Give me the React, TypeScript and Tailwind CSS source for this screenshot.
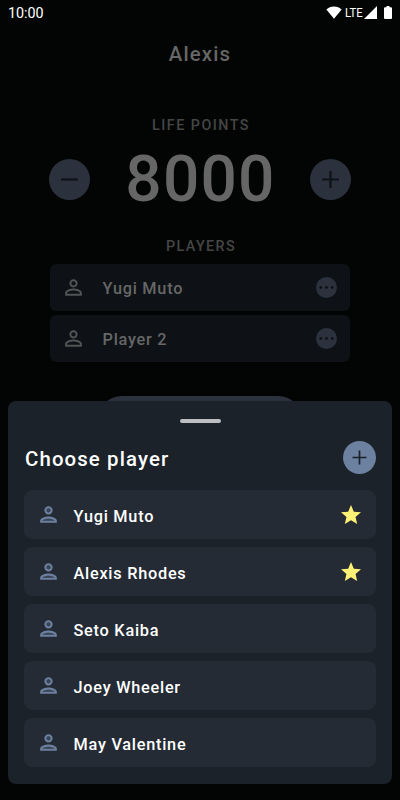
interface Player {
  name: string;
  favorite?: boolean;
}

const duelists: Player[] = [
  { name: "Yugi Muto" },
  { name: "Player 2" },
];

const roster: Player[] = [
  { name: "Yugi Muto", favorite: true },
  { name: "Alexis Rhodes", favorite: true },
  { name: "Seto Kaiba" },
  { name: "Joey Wheeler" },
  { name: "May Valentine" },
];

function PersonIcon() {
  return (
    <svg viewBox="0 0 24 24" fill="currentColor" className="size-[25px] text-[#525354]">
      <path d="M12 5.9a2.1 2.1 0 1 1 0 4.2 2.1 2.1 0 0 1 0-4.2m0 9c2.97 0 6.1 1.46 6.1 2.1v1.1H5.9V17c0-.64 3.13-2.1 6.1-2.1M12 4C9.79 4 8 5.79 8 8s1.79 4 4 4 4-1.79 4-4-1.79-4-4-4zm0 9c-2.67 0-8 1.34-8 4v3h16v-3c0-2.66-5.33-4-8-4z" />
    </svg>
  );
}

function PersonTwoToneIcon() {
  return (
    <svg viewBox="0 0 24 24" fill="currentColor" className="size-[25px] text-[#6c80a0]">
      <path d="M12 6a2 2 0 1 0 0 4 2 2 0 0 0 0-4zM12 16c-2.69 0-5.77 1.28-6 2h12c-.2-.71-3.3-2-6-2z" opacity="0.3" />
      <path
        fillRule="evenodd"
        d="M12 4a4 4 0 1 0 0 8 4 4 0 0 0 0-8zm0 6a2 2 0 1 1 0-4 2 2 0 0 1 0 4zM12 14c-2.67 0-8 1.34-8 4v2h16v-2c0-2.66-5.33-4-8-4zm-6 4c.22-.72 3.31-2 6-2 2.7 0 5.8 1.29 6 2H6z"
      />
    </svg>
  );
}

function StarIcon() {
  return (
    <svg viewBox="0 0 24 24" fill="#fff176" className="mr-px size-6">
      <path d="M12 17.27 18.18 21l-1.64-7.03L22 9.24l-7.19-.61L12 2 9.19 8.63 2 9.24l5.46 4.73L5.82 21z" />
    </svg>
  );
}

function StatusBar() {
  return (
    <div className="flex h-[25px] items-center justify-between px-2 text-white">
      <span className="pt-px text-[14.3px] leading-none">10:00</span>
      <div className="flex items-center">
        <svg viewBox="0 0 16 13" fill="currentColor" className="h-[13px] w-4">
          <path d="M8 12.8.4 3.6C2.4 1.5 5 .5 8 .5s5.6 1 7.6 3.1z" />
        </svg>
        <span className="ml-[3px] w-5 origin-left scale-x-[0.84] text-[13.5px] leading-none">LTE</span>
        <svg viewBox="0 0 13 13" fill="currentColor" className="-ml-px size-[13px]">
          <path d="M13 0v13H0z" />
        </svg>
        <svg viewBox="0 0 8 13" fill="currentColor" className="ml-[7px] h-[13px] w-2">
          <path d="M2.5 0h3v1.3H7q1 0 1 1V12q0 1-1 1H1q-1 0-1-1V2.3q0-1 1-1h1.5z" />
        </svg>
      </div>
    </div>
  );
}

function LifeButton({ plus }: { plus?: boolean }) {
  return (
    <button className="flex size-[41px] items-center justify-center rounded-full bg-[#2b323e] text-[#0f1216]">
      <svg viewBox="0 0 17 17" stroke="currentColor" strokeWidth="2.2" className="size-[17px]">
        <path d={plus ? "M0 8.5h17M8.5 0v17" : "M0 8.5h17"} />
      </svg>
    </button>
  );
}

function PlayerSheet() {
  return (
    <div className="absolute inset-x-2 top-[401px] h-[383px] rounded-lg bg-[#1c2229] px-4 pt-[18px]">
      <div className="mx-auto h-1 w-[41px] rounded-full bg-[#bcbec2]" />
      <div className="mt-[18px] flex h-[33px] items-center justify-between">
        <h2 className="pl-px pt-[3px] text-[20.4px] font-medium tracking-[1.12px] text-white">Choose player</h2>
        <button className="flex size-[33px] items-center justify-center rounded-full bg-[#6c80a0] text-[#1c2229]">
          <svg viewBox="0 0 15 15" stroke="currentColor" strokeWidth="1.7" className="size-[15px]">
            <path d="M.5 7.5h14M7.5.5v14" />
          </svg>
        </button>
      </div>
      <ul className="mt-4 flex flex-col gap-2">
        {roster.map((player) => (
          <li key={player.name} className="flex h-[49px] items-center rounded-lg bg-[#242b34] px-3">
            <PersonTwoToneIcon />
            <span className="ml-[12.5px] flex-1 pt-[5px] text-[16.3px] font-medium tracking-[0.75px] text-white">{player.name}</span>
            {player.favorite && <StarIcon />}
          </li>
        ))}
      </ul>
    </div>
  );
}

export default function App() {
  return (
    <div className="relative h-[800px] w-[400px] overflow-hidden bg-[#030504] font-['Roboto',sans-serif]">
      <StatusBar />
      <h1 className="mt-[14px] text-center text-[20.4px] font-medium leading-[30px] tracking-[1.15px] text-[#666766]">Alexis</h1>

      {/* Life points */}
      <p className="mt-[46px] pl-[2px] text-center text-[14.3px] font-medium leading-5 tracking-[1.5px] text-[#454645]">LIFE POINTS</p>
      <div className="mt-[14px] flex h-[61px] items-center justify-between px-[49px]">
        <LifeButton />
        <span className="pl-px text-[64px] font-medium leading-none tracking-[1.2px] text-[#666666]">8000</span>
        <LifeButton plus />
      </div>

      {/* Players */}
      <p className="mt-[26px] pl-[2px] text-center text-[14.3px] font-medium leading-5 tracking-[1.4px] text-[#454645]">PLAYERS</p>
      <ul className="mx-[50px] mt-2 flex flex-col gap-1">
        {duelists.map((player) => (
          <li key={player.name} className="flex h-[47px] items-center rounded-md bg-[#0e1115] pl-[11px] pr-[13px]">
            <PersonIcon />
            <span className="ml-[16.5px] flex-1 pt-[3px] text-[16.3px] font-medium tracking-[0.75px] text-[#666767]">{player.name}</span>
            <svg viewBox="0 0 21 21" fill="#0b0d10" className="size-[21px] rounded-full bg-[#2b323e]">
              <circle cx="4.7" cy="10.5" r="1.3" />
              <circle cx="10.5" cy="10.5" r="1.3" />
              <circle cx="16.3" cy="10.5" r="1.3" />
            </svg>
          </li>
        ))}
      </ul>
      <button className="mx-auto mt-[34px] block h-12 w-[204px] rounded-full bg-[#2b323e]" />

      <PlayerSheet />
    </div>
  );
}
